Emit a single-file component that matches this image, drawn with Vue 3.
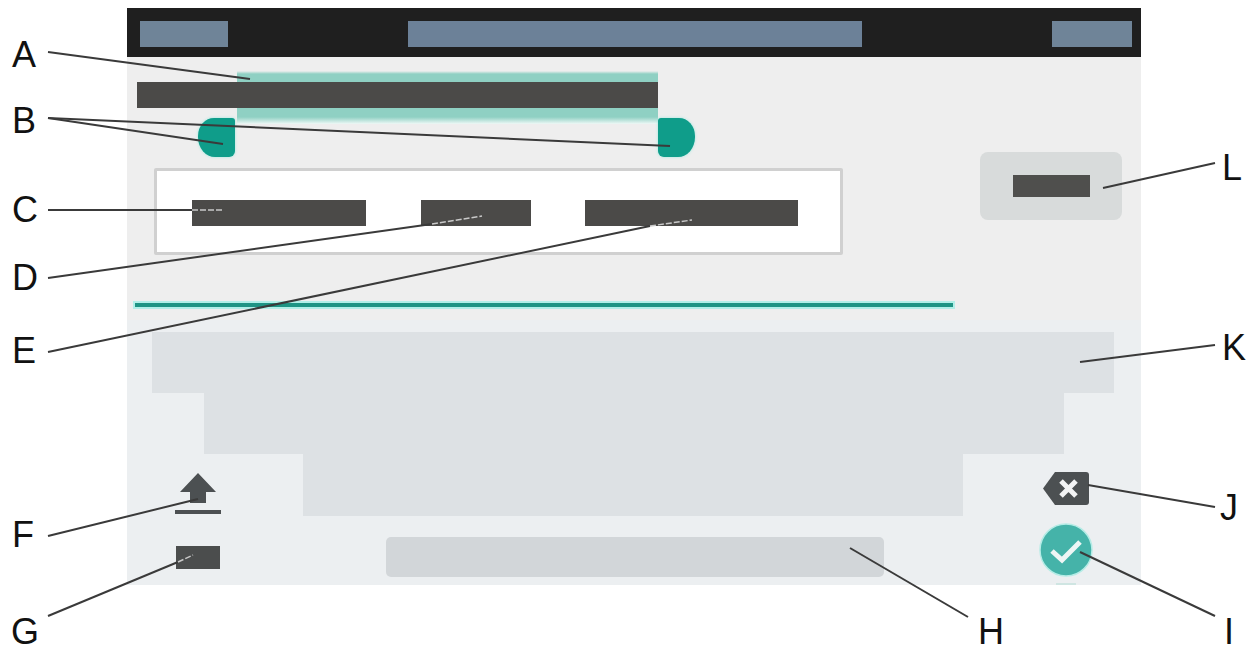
<script setup>
const labels = [
  { t: 'A', x: 12, y: 40 }, { t: 'B', x: 12, y: 106 }, { t: 'C', x: 12, y: 195 },
  { t: 'D', x: 12, y: 263 }, { t: 'E', x: 12, y: 336 }, { t: 'F', x: 12, y: 520 },
  { t: 'G', x: 11, y: 617 }, { t: 'H', x: 978, y: 617 }, { t: 'I', x: 1224, y: 617 },
  { t: 'J', x: 1220, y: 493 }, { t: 'K', x: 1222, y: 333 }, { t: 'L', x: 1222, y: 153 }
]
const lines = [
  [48, 52, 250, 79], [48, 118, 670, 146], [48, 118, 223, 144], [48, 210, 192, 210],
  [48, 278, 432, 224], [48, 352, 650, 226], [48, 536, 198, 499], [48, 616, 178, 562],
  [968, 617, 850, 548], [1215, 616, 1080, 552], [1215, 507, 1088, 485],
  [1215, 345, 1080, 362], [1215, 163, 1103, 188]
]
const inner = [
  [192, 210, 223, 210], [432, 224, 482, 216], [650, 226, 692, 220], [178, 562, 193, 555]
]
</script>

<template>
  <div class="page">
    <div class="device">
      <header class="topbar">
        <div class="block b1"></div>
        <div class="block b2"></div>
        <div class="block b3"></div>
      </header>

      <section class="editor">
        <div class="left">
          <div class="text-line">
            <div class="selection"></div>
            <div class="text"></div>
          </div>
          <div class="handles">
            <div class="handle left-handle"></div>
            <div class="handle right-handle"></div>
          </div>
          <div class="popup">
            <div class="pill p1"></div>
            <div class="pill p2"></div>
            <div class="pill p3"></div>
          </div>
          <div class="underline"></div>
        </div>
        <div class="right">
          <div class="button"><div class="button-label"></div></div>
        </div>
      </section>

      <section class="keyboard">
        <div class="key row1"></div>
        <div class="key row2"></div>
        <div class="row3">
          <svg class="shift" viewBox="0 0 46 42" width="46" height="42">
            <path d="M23 0 L41 19 L31 19 L31 30 L15 30 L15 19 L5 19 Z" fill="#4c5052" />
            <rect x="0" y="37" width="46" height="4" fill="#4c5052" />
          </svg>
          <div class="key row3-key"></div>
          <svg class="backspace" viewBox="0 0 46 33" width="46" height="33">
            <path d="M12 0 L43 0 Q46 0 46 3 L46 30 Q46 33 43 33 L12 33 L0 16.5 Z" fill="#4c5052" />
            <path d="M18 9 L33 24 M33 9 L18 24" stroke="#f2f3f4" stroke-width="5" fill="none" />
          </svg>
        </div>
        <div class="bottom-row">
          <div class="symbols"></div>
          <div class="space"></div>
          <div class="confirm-wrap">
            <svg class="confirm" viewBox="0 0 54 54" width="54" height="54">
              <circle cx="27" cy="27" r="26" fill="#45b3a9" stroke="#b5ece6" stroke-width="1.5" />
              <path d="M13 28 L23 37 L41 19" fill="none" stroke="#eef6f5" stroke-width="5" />
            </svg>
            <div class="confirm-tick"></div>
          </div>
        </div>
      </section>
    </div>

    <svg class="leaders" width="1253" height="653" viewBox="0 0 1253 653">
      <line v-for="(l, i) in lines" :key="i" :x1="l[0]" :y1="l[1]" :x2="l[2]" :y2="l[3]"
        stroke="#3a3a3a" stroke-width="2" />
      <line v-for="(l, i) in inner" :key="'in' + i" :x1="l[0]" :y1="l[1]" :x2="l[2]" :y2="l[3]"
        stroke="#c9c9c9" stroke-width="1.5" stroke-dasharray="6 2" />
    </svg>
    <span v-for="l in labels" :key="l.t" class="label" :style="{ left: l.x + 'px', top: l.y + 'px' }">{{ l.t }}</span>
  </div>
</template>

<style>
html, body { margin: 0; background: #fff; }
</style>

<style scoped>
.page {
  position: relative;
  width: 1253px;
  height: 653px;
  padding: 8px 0 0 127px;
  box-sizing: border-box;
  overflow: hidden;
  background: #fff;
  font-family: "Liberation Sans", Arial, sans-serif;
}
.device { width: 1014px; height: 577px; display: flex; flex-direction: column; }

.topbar {
  height: 49px;
  flex: none;
  background: #1f1f1f;
  display: flex;
  align-items: flex-start;
  padding: 13px 9px 0 13px;
  box-sizing: border-box;
}
.block { height: 26px; background: #6f8498; }
.b1 { width: 88px; }
.b2 { width: 454px; margin-left: 180px; background: #6c8198; }
.b3 { width: 80px; margin-left: 190px; }

.editor { height: 263px; flex: none; background: #eeeeee; display: flex; }
.left { width: 853px; flex: none; }
.right { padding-top: 95px; }

.text-line { position: relative; width: 521px; height: 26px; margin: 25px 0 0 10px; }
.text { position: absolute; inset: 0; background: #4b4a48; }
.selection {
  position: absolute;
  left: 100px;
  right: 0;
  top: -11px;
  bottom: -16px;
  background: linear-gradient(to bottom, #eeeeee 0, #8fd0c3 3px, #8fd0c3 46px, #eef8f6 53px);
}
.handles {
  position: relative;
  display: flex;
  justify-content: space-between;
  width: 497px;
  height: 39px;
  margin: 10px 0 0 71px;
}
.handle { width: 37px; height: 39px; background: #0f9d8a; box-shadow: 0 0 3px #9ce8de; }
.left-handle { border-radius: 16px 3px 6px 17px / 18px 3px 6px 20px; }
.right-handle { border-radius: 3px 16px 17px 6px / 3px 18px 20px 6px; }

.popup {
  width: 689px;
  height: 87px;
  margin: 11px 0 0 27px;
  box-sizing: border-box;
  border: 3px solid #d0d0d0;
  border-radius: 2px;
  background: #fff;
  display: flex;
  align-items: flex-start;
  padding: 29px 0 0 35px;
}
.pill { height: 26px; background: #4b4a48; }
.p1 { width: 174px; }
.p2 { width: 110px; margin-left: 55px; }
.p3 { width: 213px; margin-left: 54px; }

.underline {
  width: 818px;
  height: 4px;
  margin: 48px 0 0 8px;
  background: #1f9484;
  box-shadow: 0 0 0 2px #b2efe8;
}

.button {
  width: 142px;
  height: 68px;
  border-radius: 8px;
  background: #d8dbdb;
  display: flex;
  align-items: center;
  justify-content: center;
}
.button-label { width: 77px; height: 22px; background: #4f4f4d; }

.keyboard {
  flex: 1;
  background: #eceff1;
  padding-top: 12px;
  box-sizing: border-box;
  display: flex;
  flex-direction: column;
}
.key { background: #dde1e4; }
.row1 { width: 962px; height: 61px; margin-left: 25px; }
.row2 { width: 860px; height: 61px; margin-left: 77px; }
.row3 { display: flex; height: 62px; }
.shift { margin: 19px 0 0 48px; flex: none; }
.row3-key { width: 660px; height: 62px; margin-left: 82px; }
.backspace { margin: 18px 0 0 80px; flex: none; }
.bottom-row { display: flex; height: 69px; align-items: flex-start; }
.symbols { width: 44px; height: 23px; margin: 30px 0 0 49px; background: #4b4d4d; }
.space {
  width: 498px;
  height: 40px;
  margin: 21px 0 0 166px;
  border-radius: 5px;
  background: #d2d6d9;
}
.confirm-wrap { margin: 7px 0 0 155px; display: flex; flex-direction: column; align-items: center; }
.confirm { display: block; }
.confirm-tick { width: 20px; height: 2px; margin-top: 6px; background: #cfe5e2; }

.leaders { position: absolute; left: 0; top: 0; pointer-events: none; }
.label {
  position: absolute;
  font-size: 36px;
  line-height: 30px;
  color: #111;
}
</style>
